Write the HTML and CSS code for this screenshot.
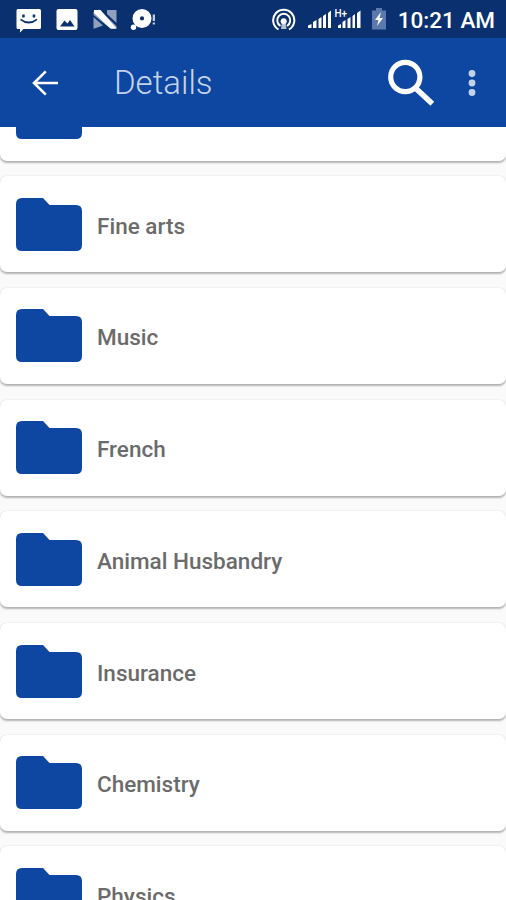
FILE: index.html
```html
<!DOCTYPE html>
<html lang="en">
<head>
<meta charset="utf-8">
<title>Details</title>
<link rel="stylesheet" href="styles.css">
</head>
<body>
<svg class="defs" width="0" height="0" aria-hidden="true">
  <symbol id="folder" viewBox="0 0 66 53"><path d="M6 0H27L33.500 7H60Q66 7 66 13V47Q66 53 60 53H6Q0 53 0 47V6Q0 0 6 0Z" fill="#0d47a1"/></symbol>
</svg>
<div class="screen">
  <div class="status">
    <svg class="notifications" width="142" height="26" viewBox="16 8 142 26" fill="#fff">
      <path fill-rule="evenodd" d="M18 9H39.500Q41 9 41 10.500V27.500Q41 29 39.500 29H23.500L20 32.500V29H18Q16.500 29 16.500 27.500V10.500Q16.500 9 18 9ZM22.200 14.500V17.500H24.700V14.500ZM32.700 14.500V17.500H35.200V14.500ZM20 20Q28.700 27 37.500 20L36.500 18.700Q28.700 24.500 21 18.700Z"/>
      <path fill-rule="evenodd" d="M58.500 9H75.500Q77.500 9 77.500 11V28Q77.500 30 75.500 30H58.500Q56.500 30 56.500 28V11Q56.500 9 58.500 9ZM60 26.500H74.500L70 20L67.500 23.500L64.500 20.500Z"/>
      <path d="M93.500 12L99 9.500L116.500 26V29H111L93.500 15ZM107 10H116.500V23L107 14ZM93.500 17L103 25.500L94.500 28.500H93.500Z" opacity=".55"/>
      <path d="M94 10H100.500L116.500 28.500H110.500L94 13Z"/>
      <path fill-rule="evenodd" d="M142 9a9.500 9.500 0 1 1 0 19a9.500 9.500 0 1 1 0-19ZM142 16.300a2.100 2.100 0 1 0 0 4.200a2.100 2.100 0 1 0 0-4.200Z"/>
      <circle cx="133.500" cy="27.300" r="2.700"/>
      <path d="M152.700 14.500H155V21H152.700ZM152.700 22.500H155V24.500H152.700Z" opacity=".75"/>
    </svg>
    <div class="system">
      <svg width="116" height="26" viewBox="272 6 116 26">
        <g fill="none" stroke="#fff" stroke-width="2">
          <path d="M278.500 29.500A10.600 10.600 0 1 1 289 29.500"/>
          <path d="M280.500 26A6.500 6.500 0 1 1 287 26"/>
        </g>
        <circle cx="283.700" cy="21.200" r="3" fill="#fff"/>
        <path d="M282 22H285.500L286.500 29H281Z" fill="#fff" opacity=".7"/>
        <g fill="#fff">
          <path d="M308 25.500L311.500 24V28H308ZM313 22L316.500 20V28H313ZM318.500 19L321.500 17V28H318.500ZM323 16L326 14V28H323ZM328 13L331 10.500V28H328Z"/>
          <path d="M338 25.500L341 24V28H338ZM342.500 22L345.500 20V28H342.500ZM347.500 19L350.500 17V28H347.500ZM352.500 16L355 14V28H352.500ZM357 13L360.500 10.500V28H357Z"/>
        </g>
        <text x="334.500" y="16.500" class="network">H+</text>
        <path d="M372 10.500H376V8H382V10.500H386V29.500H372Z" fill="#7793bf" opacity=".75"/>
        <path d="M381 12L375 20H378.500L377 26L383 18H379.500Z" fill="#fff"/>
      </svg>
      <span class="time">10:21 AM</span>
    </div>
  </div>
  <header class="bar">
    <svg class="back" width="28" height="28" viewBox="0 0 28 28" fill="none" stroke="#fff" stroke-width="2.600"><path d="M27 14H3M14.800 2.300L3 14L14.800 25.700"/></svg>
    <h1>Details</h1>
    <svg class="search" width="50" height="50" viewBox="386 57 50 50" fill="none" stroke="#fff"><circle cx="405.300" cy="76" r="14.600" stroke-width="5.200"/><path d="M416.500 88L432.300 102.700" stroke-width="5.500"/></svg>
    <svg class="more" width="8" height="28" viewBox="0 0 8 28" fill="#c5d3ea"><circle cx="4" cy="4.500" r="3.400"/><circle cx="4" cy="14" r="3.400"/><circle cx="4" cy="23.500" r="3.400"/></svg>
  </header>
  <main class="list">
    <div class="card first"><svg class="folder"><use href="#folder"/></svg></div>
    <div class="card"><svg class="folder"><use href="#folder"/></svg><span>Fine arts</span></div>
    <div class="card"><svg class="folder"><use href="#folder"/></svg><span>Music</span></div>
    <div class="card"><svg class="folder"><use href="#folder"/></svg><span>French</span></div>
    <div class="card"><svg class="folder"><use href="#folder"/></svg><span>Animal Husbandry</span></div>
    <div class="card"><svg class="folder"><use href="#folder"/></svg><span>Insurance</span></div>
    <div class="card"><svg class="folder"><use href="#folder"/></svg><span>Chemistry</span></div>
    <div class="card"><svg class="folder"><use href="#folder"/></svg><span>Physics</span></div>
  </main>
</div>
</body>
</html>
```
FILE: styles.css
```css
* { box-sizing: border-box; }
body { margin: 0; font-family: Roboto, sans-serif; }
.defs { display: block; }
.screen {
  width: 506px;
  height: 900px;
  overflow: hidden;
  display: flex;
  flex-direction: column;
  background: #fafafa;
}
.status {
  flex: none;
  height: 38px;
  display: flex;
  justify-content: space-between;
  align-items: flex-start;
  padding: 6px 11px 0 16px;
  background: #0a3070;
  color: #fff;
}
.notifications { margin-top: 2px; }
.system { display: flex; gap: 10px; }
.network { font: 500 10px Roboto, sans-serif; fill: #fff; stroke: #0a3070; stroke-width: 2px; paint-order: stroke; }
.time { font-size: 22.5px; font-weight: 500; line-height: 28px; white-space: nowrap; }
.bar {
  flex: none;
  height: 89px;
  display: flex;
  align-items: center;
  padding: 0 30px 0 31px;
  background: #0d47a1;
}
.bar h1 {
  margin: 0 auto 0 55px;
  font-size: 33px;
  font-weight: 300;
  line-height: 40px;
  color: #c5d3ea;
}
.search { margin-right: 32px; }
.list { flex: 1; min-height: 0; overflow: hidden; }
.card {
  display: flex;
  align-items: center;
  gap: 15.5px;
  height: 96px;
  margin-bottom: 15.7px;
  padding-left: 15.5px;
  background: #fff;
  border-radius: 7px;
  box-shadow: 0 1.5px 2px rgba(0, 0, 0, .28), 0 0 2px rgba(0, 0, 0, .08);
}
.card.first { margin-top: -62.4px; }
.folder { flex: none; width: 66px; height: 53px; }
.card span { padding-top: 3px; font-size: 22.5px; font-weight: 500; line-height: 30px; color: #6b6b6b; }
```
